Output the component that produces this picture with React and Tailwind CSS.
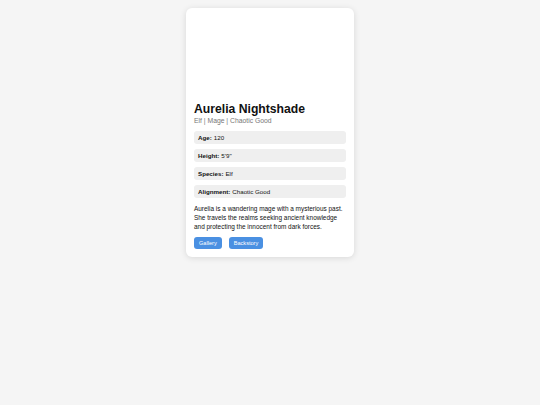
import React from 'react';

const stats = [
  { label: 'Age', value: '120' },
  { label: 'Height', value: '5\'9"' },
  { label: 'Species', value: 'Elf' },
  { label: 'Alignment', value: 'Chaotic Good' },
];

export default function App() {
  return (
    <div className="min-h-screen bg-[#f5f5f5] pt-[8px] font-['Liberation_Sans',Arial,sans-serif]">
      <div className="mx-auto w-[168px] rounded-[6px] bg-white p-[8px] shadow-[0_1px_6px_rgba(0,0,0,0.12)]">
        <div className="h-[86px]" />
        <h1 className="text-[12.2px] font-bold leading-[14px] text-[#111]">Aurelia Nightshade</h1>
        <p className="mt-[1px] text-[6.8px] leading-[8px] text-[#777]">Elf | Mage | Chaotic Good</p>
        <div className="mt-[6px] flex flex-col gap-[5px]">
          {stats.map((s) => (
            <div key={s.label} className="flex h-[13px] items-center rounded-[3px] bg-[#efefef] px-[4px] text-[6.2px] text-[#111]">
              <span className="font-bold">{s.label}:</span>
              <span className="ml-[2px]">{s.value}</span>
            </div>
          ))}
        </div>
        <p className="mt-[6px] text-[6.45px] leading-[9px] text-[#111]">
          Aurelia is a wandering mage with a mysterious past. She travels the realms seeking ancient knowledge and protecting the innocent from dark forces.
        </p>
        <div className="mt-[6px] flex gap-[7px]">
          <button className="h-[12px] rounded-[3px] bg-[#4a90e2] px-[5px] text-[5.6px] text-white">Gallery</button>
          <button className="h-[12px] rounded-[3px] bg-[#4a90e2] px-[5px] text-[5.6px] text-white">Backstory</button>
        </div>
      </div>
    </div>
  );
}
